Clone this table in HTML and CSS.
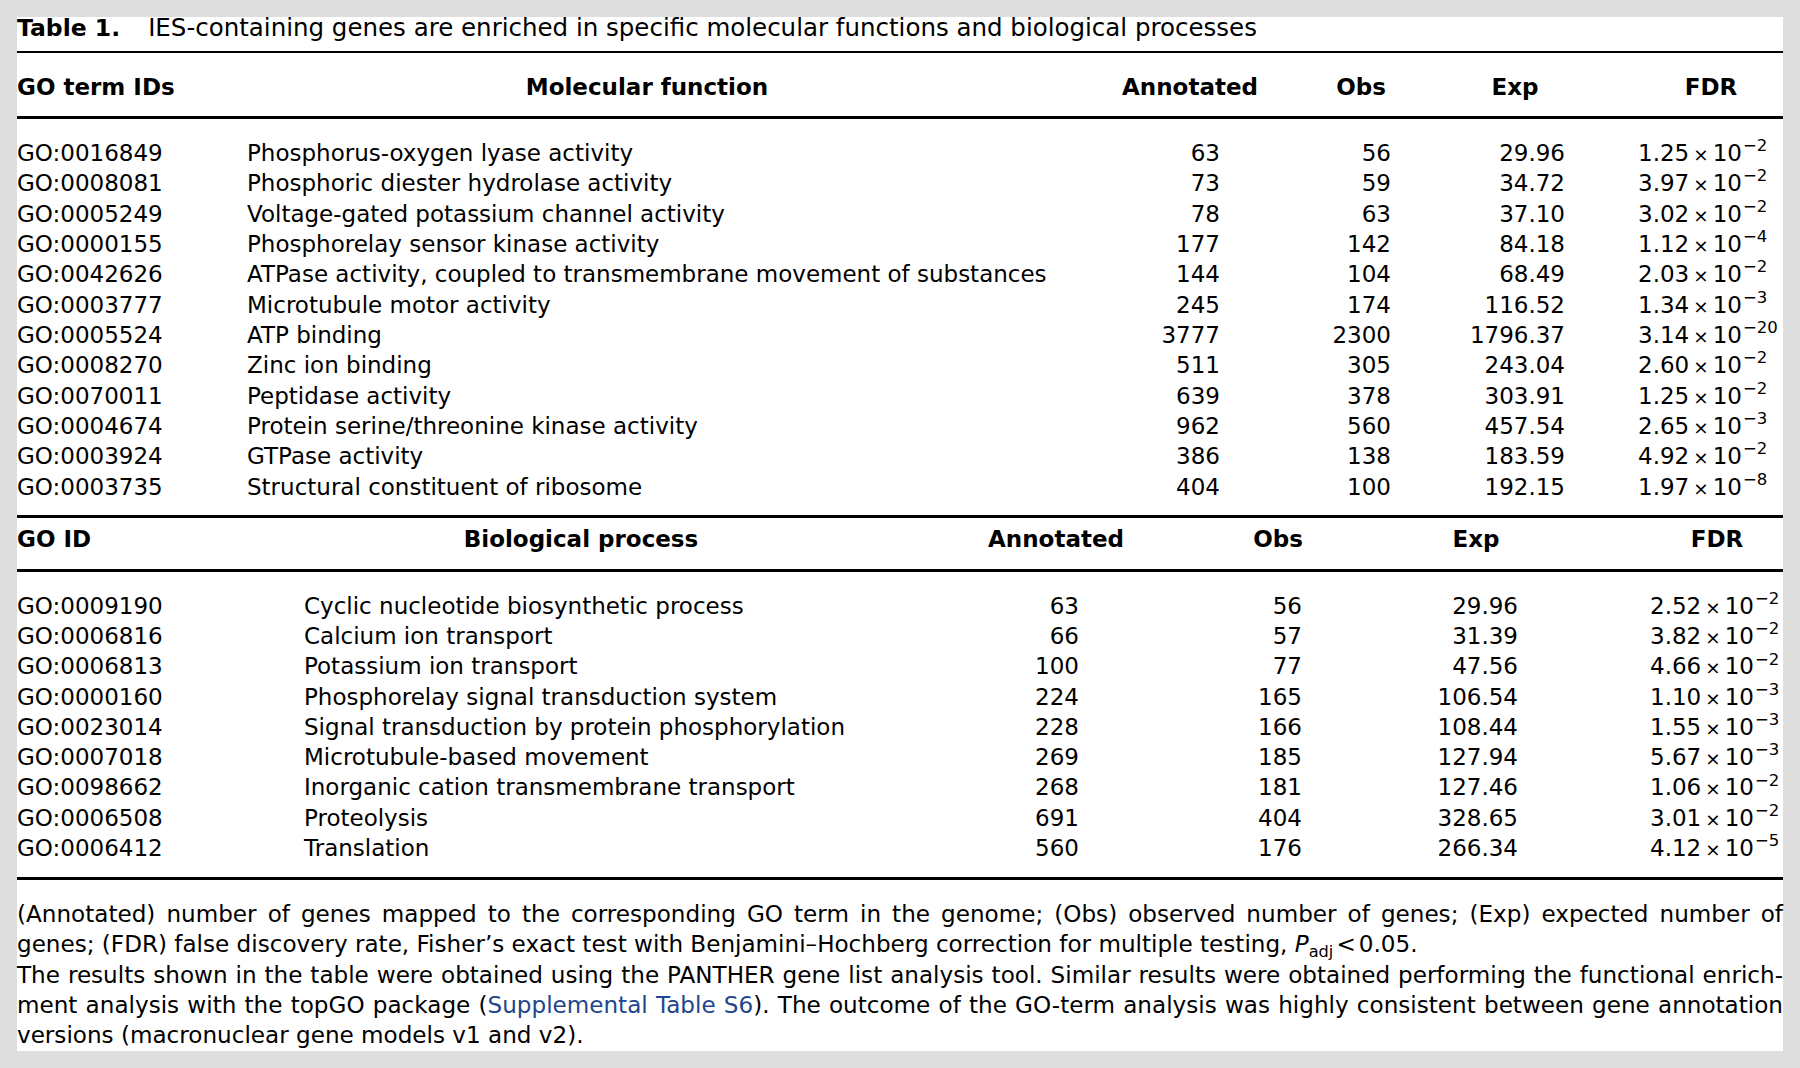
FILE: index.html
```html
<!DOCTYPE html>
<html lang="en">
<head>
<meta charset="utf-8">
<title>Table 1</title>
<link rel="stylesheet" href="styles.css">
</head>
<body>
<div class="sheet">
  <div class="caption"><b>Table 1.</b>IES-containing genes are enriched in specific molecular functions and biological processes</div>
  <div class="rule thin"></div>

  <div class="head mol-head">
    <div class="c-id">GO term IDs</div>
    <div class="c-ctr">Molecular function</div>
    <div class="c-ctr">Annotated</div>
    <div class="c-ctr">Obs</div>
    <div class="c-ctr">Exp</div>
    <div class="c-ctr">FDR</div>
  </div>
  <div class="rule"></div>

  <div class="body mol-body">
    <div class="row"><span>GO:0016849</span><span>Phosphorus-oxygen lyase activity</span><span class="n">63</span><span class="n">56</span><span class="n">29.96</span><span class="f">1.25<span class="x">×</span>10<sup>−2</sup></span></div>
    <div class="row"><span>GO:0008081</span><span>Phosphoric diester hydrolase activity</span><span class="n">73</span><span class="n">59</span><span class="n">34.72</span><span class="f">3.97<span class="x">×</span>10<sup>−2</sup></span></div>
    <div class="row"><span>GO:0005249</span><span>Voltage-gated potassium channel activity</span><span class="n">78</span><span class="n">63</span><span class="n">37.10</span><span class="f">3.02<span class="x">×</span>10<sup>−2</sup></span></div>
    <div class="row"><span>GO:0000155</span><span>Phosphorelay sensor kinase activity</span><span class="n">177</span><span class="n">142</span><span class="n">84.18</span><span class="f">1.12<span class="x">×</span>10<sup>−4</sup></span></div>
    <div class="row"><span>GO:0042626</span><span>ATPase activity, coupled to transmembrane movement of substances</span><span class="n">144</span><span class="n">104</span><span class="n">68.49</span><span class="f">2.03<span class="x">×</span>10<sup>−2</sup></span></div>
    <div class="row"><span>GO:0003777</span><span>Microtubule motor activity</span><span class="n">245</span><span class="n">174</span><span class="n">116.52</span><span class="f">1.34<span class="x">×</span>10<sup>−3</sup></span></div>
    <div class="row"><span>GO:0005524</span><span>ATP binding</span><span class="n">3777</span><span class="n">2300</span><span class="n">1796.37</span><span class="f">3.14<span class="x">×</span>10<sup>−20</sup></span></div>
    <div class="row"><span>GO:0008270</span><span>Zinc ion binding</span><span class="n">511</span><span class="n">305</span><span class="n">243.04</span><span class="f">2.60<span class="x">×</span>10<sup>−2</sup></span></div>
    <div class="row"><span>GO:0070011</span><span>Peptidase activity</span><span class="n">639</span><span class="n">378</span><span class="n">303.91</span><span class="f">1.25<span class="x">×</span>10<sup>−2</sup></span></div>
    <div class="row"><span>GO:0004674</span><span>Protein serine/threonine kinase activity</span><span class="n">962</span><span class="n">560</span><span class="n">457.54</span><span class="f">2.65<span class="x">×</span>10<sup>−3</sup></span></div>
    <div class="row"><span>GO:0003924</span><span>GTPase activity</span><span class="n">386</span><span class="n">138</span><span class="n">183.59</span><span class="f">4.92<span class="x">×</span>10<sup>−2</sup></span></div>
    <div class="row"><span>GO:0003735</span><span>Structural constituent of ribosome</span><span class="n">404</span><span class="n">100</span><span class="n">192.15</span><span class="f">1.97<span class="x">×</span>10<sup>−8</sup></span></div>
  </div>
  <div class="rule"></div>

  <div class="head bio-head">
    <div class="c-id">GO ID</div>
    <div class="c-ctr">Biological process</div>
    <div class="c-ctr">Annotated</div>
    <div class="c-ctr">Obs</div>
    <div class="c-ctr">Exp</div>
    <div class="c-ctr">FDR</div>
  </div>
  <div class="rule"></div>

  <div class="body bio-body">
    <div class="row"><span>GO:0009190</span><span>Cyclic nucleotide biosynthetic process</span><span class="n">63</span><span class="n">56</span><span class="n">29.96</span><span class="f">2.52<span class="x">×</span>10<sup>−2</sup></span></div>
    <div class="row"><span>GO:0006816</span><span>Calcium ion transport</span><span class="n">66</span><span class="n">57</span><span class="n">31.39</span><span class="f">3.82<span class="x">×</span>10<sup>−2</sup></span></div>
    <div class="row"><span>GO:0006813</span><span>Potassium ion transport</span><span class="n">100</span><span class="n">77</span><span class="n">47.56</span><span class="f">4.66<span class="x">×</span>10<sup>−2</sup></span></div>
    <div class="row"><span>GO:0000160</span><span>Phosphorelay signal transduction system</span><span class="n">224</span><span class="n">165</span><span class="n">106.54</span><span class="f">1.10<span class="x">×</span>10<sup>−3</sup></span></div>
    <div class="row"><span>GO:0023014</span><span>Signal transduction by protein phosphorylation</span><span class="n">228</span><span class="n">166</span><span class="n">108.44</span><span class="f">1.55<span class="x">×</span>10<sup>−3</sup></span></div>
    <div class="row"><span>GO:0007018</span><span>Microtubule-based movement</span><span class="n">269</span><span class="n">185</span><span class="n">127.94</span><span class="f">5.67<span class="x">×</span>10<sup>−3</sup></span></div>
    <div class="row"><span>GO:0098662</span><span>Inorganic cation transmembrane transport</span><span class="n">268</span><span class="n">181</span><span class="n">127.46</span><span class="f">1.06<span class="x">×</span>10<sup>−2</sup></span></div>
    <div class="row"><span>GO:0006508</span><span>Proteolysis</span><span class="n">691</span><span class="n">404</span><span class="n">328.65</span><span class="f">3.01<span class="x">×</span>10<sup>−2</sup></span></div>
    <div class="row"><span>GO:0006412</span><span>Translation</span><span class="n">560</span><span class="n">176</span><span class="n">266.34</span><span class="f">4.12<span class="x">×</span>10<sup>−5</sup></span></div>
  </div>
  <div class="rule"></div>

  <div class="notes">
    <div class="jl">(Annotated) number of genes mapped to the corresponding GO term in the genome; (Obs) observed number of genes; (Exp) expected number of</div>
    <div>genes; (FDR) false discovery rate, Fisher’s exact test with Benjamini–Hochberg correction for multiple testing, <i>P</i><sub>adj</sub><span class="lt">&lt;</span>0.05.</div>
    <div class="jl">The results shown in the table were obtained using the PANTHER gene list analysis tool. Similar results were obtained performing the functional enrich-</div>
    <div class="jl">ment analysis with the topGO package (<span class="link">Supplemental Table S6</span>). The outcome of the GO-term analysis was highly consistent between gene annotation</div>
    <div>versions (macronuclear gene models v1 and v2).</div>
  </div>
</div>
</body>
</html>
```

FILE: styles.css
```css
* { box-sizing: border-box; }

body {
  margin: 0;
  padding: 17px;
  background: #dedede;
  font-family: "DejaVu Sans", "Liberation Sans", sans-serif;
  color: #000;
}

.sheet {
  width: 1766px;
  height: 1034px;
  background: #fff;
}

.caption {
  font-size: 24.5px;
  line-height: 22px;
  height: 34px;
  white-space: nowrap;
}
.caption b { font-size: 23.5px; margin-right: 28px; }

.rule { height: 3px; background: #000; }
.rule.thin { height: 2px; }

.head {
  display: grid;
  font-size: 23px;
  font-weight: bold;
  line-height: 30px;
  white-space: nowrap;
}
.c-ctr { display: flex; justify-content: center; }

.mol-head {
  grid-template-columns: 234px 792px 294px 48px 260px 138px;
  padding: 19px 0 14px;
}
.mol-head .c-ctr:last-child { margin-left: -6px; }
.bio-head {
  grid-template-columns: 288px 552px 398px 46px 350px 132px;
  padding: 6px 0 15px;
}

.body { font-size: 23px; white-space: nowrap; }
.row { display: grid; }
.n { text-align: right; }

.mol-body { padding: 19px 0 13px; }
.mol-body .row {
  grid-template-columns: 230px 873px 100px 171px 174px 218px;
  height: 30.33px;
  line-height: 30.33px;
}
.mol-body .f { padding-left: 73px; }

.bio-body { padding: 19px 0 14px; }
.bio-body .row {
  grid-template-columns: 287px 675px 100px 223px 216px 265px;
  height: 30.25px;
  line-height: 30.25px;
}
.bio-body .f { padding-left: 132px; }

.x { font-size: 0.8em; margin: 0 4px; }
sup {
  font-size: 0.72em;
  line-height: 0;
  vertical-align: 0.6em;
  margin-left: 1px;
}

.notes {
  padding-top: 19px;
  font-size: 23.1px;
  line-height: 30.3px;
}
.jl { text-align: justify; text-align-last: justify; word-spacing: -4px; }
.notes sub { font-size: 0.7em; line-height: 0; vertical-align: -0.3em; }
.lt { margin: 0 3px; }
.link { color: #22468c; }
```
